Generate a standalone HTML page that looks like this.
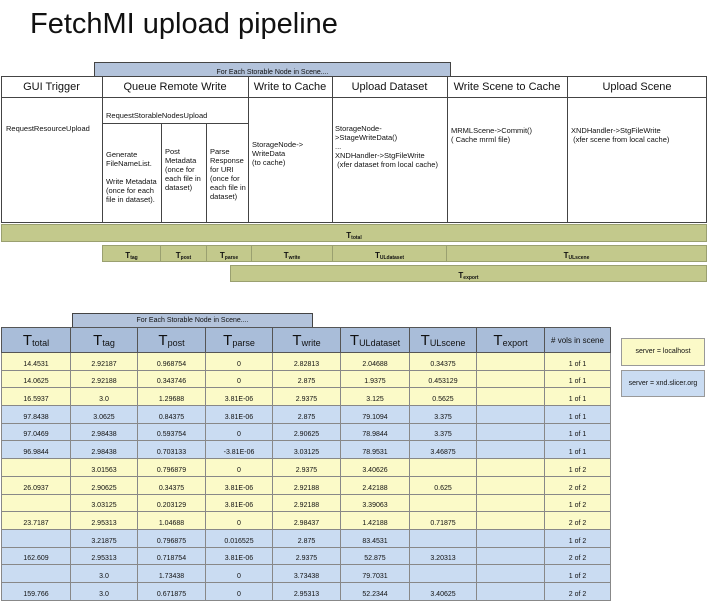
<!DOCTYPE html>
<html><head><meta charset="utf-8"><style>
*{margin:0;padding:0;box-sizing:border-box}
body{width:720px;height:600px;background:#fff;position:relative;overflow:hidden;font-family:"Liberation Sans",sans-serif;color:#111}
.a{position:absolute}
.bx{position:absolute;border:1px solid #444}
.h{font-size:11px;text-align:center;line-height:20px}
.s{font-size:7.5px;line-height:9px}
.g{position:absolute;background:#c3c98c;border:1px solid #9aa070;font-size:8px;text-align:center;font-weight:bold}
.g sub{font-size:5px;vertical-align:-1px}
table{position:absolute;left:1px;top:327px;border-collapse:collapse;font-size:7px}
td{border:1px solid #888;text-align:center;vertical-align:bottom;height:17.7px;padding:0 0 1px 0;line-height:9px}
th{background:#a9bdd9;border:1px solid #555;height:25px;font-size:15px;font-weight:normal}
th sub{font-size:9px;vertical-align:-1px}
.y td{background:#fbfac8}.b td{background:#cadcf2}
</style></head><body>
<div class="a" style="left:30px;top:8px;font-size:29px">FetchMI upload pipeline</div>
<div class="bx" style="left:94px;top:62px;width:357px;height:15px;background:#b3c3db;font-size:7px;text-align:center;line-height:20px">For Each Storable Node in Scene....</div>
<div class="bx" style="left:1px;top:76px;width:706px;height:147px"></div>
<div class="a" style="left:1px;top:97px;width:706px;border-top:1px solid #444"></div>
<div class="a" style="left:102px;top:76px;height:147px;border-left:1px solid #444"></div>
<div class="a" style="left:248px;top:76px;height:147px;border-left:1px solid #444"></div>
<div class="a" style="left:332px;top:76px;height:147px;border-left:1px solid #444"></div>
<div class="a" style="left:447px;top:76px;height:147px;border-left:1px solid #444"></div>
<div class="a" style="left:567px;top:76px;height:147px;border-left:1px solid #444"></div>
<div class="a" style="left:102px;top:123px;width:146px;border-top:1px solid #444"></div>
<div class="a" style="left:161px;top:123px;height:100px;border-left:1px solid #444"></div>
<div class="a" style="left:206px;top:123px;height:100px;border-left:1px solid #444"></div>
<div class="a h" style="left:1px;top:77px;width:101px">GUI Trigger</div>
<div class="a h" style="left:102px;top:77px;width:146px">Queue Remote Write</div>
<div class="a h" style="left:248px;top:77px;width:84px">Write to Cache</div>
<div class="a h" style="left:332px;top:77px;width:115px">Upload Dataset</div>
<div class="a h" style="left:447px;top:77px;width:120px">Write Scene to Cache</div>
<div class="a h" style="left:567px;top:77px;width:140px">Upload Scene</div>
<div class="a s" style="left:6px;top:124px">RequestResourceUpload</div>
<div class="a s" style="left:106px;top:111px">RequestStorableNodesUpload</div>
<div class="a s" style="left:106px;top:150px;width:54px">Generate FileNameList.<br><br>Write Metadata (once for each file in dataset).</div>
<div class="a s" style="left:165px;top:147px;width:40px">Post Metadata (once for each file in dataset)</div>
<div class="a s" style="left:210px;top:147px;width:38px">Parse Response for URI (once for each file in dataset)</div>
<div class="a s" style="left:252px;top:140px;width:78px">StorageNode-&gt; WriteData<br>(to cache)</div>
<div class="a s" style="left:335px;top:124px;width:110px">StorageNode- &gt;StageWriteData()<br>...<br>XNDHandler-&gt;StgFileWrite<br>&nbsp;(xfer dataset from local cache)</div>
<div class="a s" style="left:451px;top:126px">MRMLScene-&gt;Commit()<br>( Cache mrml file)</div>
<div class="a s" style="left:571px;top:126px">XNDHandler-&gt;StgFileWrite<br>&nbsp;(xfer scene from local cache)</div>
<div class="g" style="left:1px;top:224px;width:706px;height:18px;line-height:22px">T<sub>total</sub></div>
<div class="g" style="left:102px;top:245px;width:59px;height:17px;line-height:20px">T<sub>tag</sub></div>
<div class="g" style="left:160px;top:245px;width:47px;height:17px;line-height:20px">T<sub>post</sub></div>
<div class="g" style="left:206px;top:245px;width:46px;height:17px;line-height:20px">T<sub>parse</sub></div>
<div class="g" style="left:251px;top:245px;width:82px;height:17px;line-height:20px">T<sub>write</sub></div>
<div class="g" style="left:332px;top:245px;width:115px;height:17px;line-height:20px">T<sub>ULdataset</sub></div>
<div class="g" style="left:446px;top:245px;width:261px;height:17px;line-height:20px">T<sub>ULscene</sub></div>
<div class="g" style="left:230px;top:265px;width:477px;height:17px;line-height:20px">T<sub>export</sub></div>
<div class="bx" style="left:72px;top:313px;width:241px;height:15px;background:#b3c3db;font-size:7px;text-align:center;line-height:14px">For Each Storable Node in Scene....</div>
<table>
<colgroup><col style="width:69px"><col style="width:67px"><col style="width:68px"><col style="width:67px"><col style="width:68px"><col style="width:69px"><col style="width:67px"><col style="width:68px"><col style="width:66px"></colgroup>
<tr><th>T<sub>total</sub></th><th>T<sub>tag</sub></th><th>T<sub>post</sub></th><th>T<sub>parse</sub></th><th>T<sub>write</sub></th><th>T<sub>ULdataset</sub></th><th>T<sub>ULscene</sub></th><th>T<sub>export</sub></th><th style="font-size:8px"># vols in scene</th></tr>
<tr class="y"><td>14.4531</td><td>2.92187</td><td>0.968754</td><td>0</td><td>2.82813</td><td>2.04688</td><td>0.34375</td><td></td><td>1 of 1</td></tr>
<tr class="y"><td>14.0625</td><td>2.92188</td><td>0.343746</td><td>0</td><td>2.875</td><td>1.9375</td><td>0.453129</td><td></td><td>1 of 1</td></tr>
<tr class="y"><td>16.5937</td><td>3.0</td><td>1.29688</td><td>3.81E-06</td><td>2.9375</td><td>3.125</td><td>0.5625</td><td></td><td>1 of 1</td></tr>
<tr class="b"><td>97.8438</td><td>3.0625</td><td>0.84375</td><td>3.81E-06</td><td>2.875</td><td>79.1094</td><td>3.375</td><td></td><td>1 of 1</td></tr>
<tr class="b"><td>97.0469</td><td>2.98438</td><td>0.593754</td><td>0</td><td>2.90625</td><td>78.9844</td><td>3.375</td><td></td><td>1 of 1</td></tr>
<tr class="b"><td>96.9844</td><td>2.98438</td><td>0.703133</td><td>-3.81E-06</td><td>3.03125</td><td>78.9531</td><td>3.46875</td><td></td><td>1 of 1</td></tr>
<tr class="y"><td></td><td>3.01563</td><td>0.796879</td><td>0</td><td>2.9375</td><td>3.40626</td><td></td><td></td><td>1 of 2</td></tr>
<tr class="y"><td>26.0937</td><td>2.90625</td><td>0.34375</td><td>3.81E-06</td><td>2.92188</td><td>2.42188</td><td>0.625</td><td></td><td>2 of 2</td></tr>
<tr class="y"><td></td><td>3.03125</td><td>0.203129</td><td>3.81E-06</td><td>2.92188</td><td>3.39063</td><td></td><td></td><td>1 of 2</td></tr>
<tr class="y"><td>23.7187</td><td>2.95313</td><td>1.04688</td><td>0</td><td>2.98437</td><td>1.42188</td><td>0.71875</td><td></td><td>2 of 2</td></tr>
<tr class="b"><td></td><td>3.21875</td><td>0.796875</td><td>0.016525</td><td>2.875</td><td>83.4531</td><td></td><td></td><td>1 of 2</td></tr>
<tr class="b"><td>162.609</td><td>2.95313</td><td>0.718754</td><td>3.81E-06</td><td>2.9375</td><td>52.875</td><td>3.20313</td><td></td><td>2 of 2</td></tr>
<tr class="b"><td></td><td>3.0</td><td>1.73438</td><td>0</td><td>3.73438</td><td>79.7031</td><td></td><td></td><td>1 of 2</td></tr>
<tr class="b"><td>159.766</td><td>3.0</td><td>0.671875</td><td>0</td><td>2.95313</td><td>52.2344</td><td>3.40625</td><td></td><td>2 of 2</td></tr>
</table>
<div class="bx" style="left:621px;top:338px;width:84px;height:28px;background:#fbfac8;border-color:#999;font-size:7px;text-align:center;line-height:26px">server = localhost</div>
<div class="bx" style="left:621px;top:370px;width:84px;height:27px;background:#cadcf2;border-color:#999;font-size:7px;text-align:center;line-height:25px">server = xnd.slicer.org</div>
</body></html>
